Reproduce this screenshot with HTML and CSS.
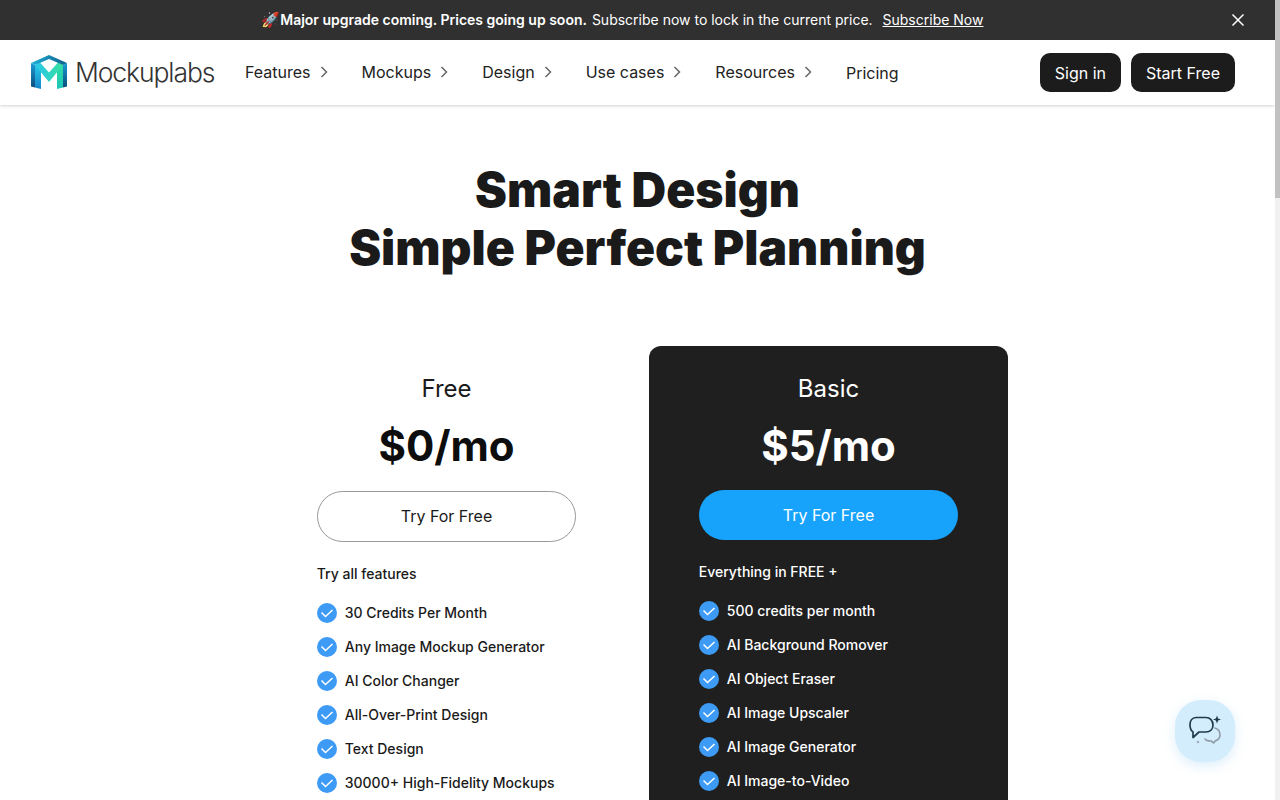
FILE: index.html
```html
<!DOCTYPE html>
<html lang="en">
<head>
<meta charset="utf-8">
<title>Mockuplabs Pricing</title>
<link rel="stylesheet" href="styles.css">
</head>
<body>
<div class="banner">
  <p class="banner-text"><span class="rocket">🚀</span><strong>Major upgrade coming. Prices going up soon.</strong> Subscribe now to lock in the current price. <a class="banner-link" href="#">Subscribe Now</a></p>
  <svg class="banner-close" width="14" height="14" viewBox="0 0 14 14"><path d="M1.500 1.500l11 11M12.500 1.500l-11 11" stroke="#fff" stroke-width="1.500" fill="none"/></svg>
</div>
<header class="nav">
  <a class="logo" href="#">
    <svg class="logo-mark" width="36" height="36" viewBox="0 0 36 36">
      <defs>
        <linearGradient id="lgOuterL" x1="0" y1="0" x2="0" y2="1"><stop offset="0" stop-color="#1b9ad6"/><stop offset="1" stop-color="#0a4f7a"/></linearGradient>
        <linearGradient id="lgInnerL" x1="0" y1="0" x2="0" y2="1"><stop offset="0" stop-color="#25c9e8"/><stop offset="1" stop-color="#1585c9"/></linearGradient>
        <linearGradient id="lgInnerR" x1="0" y1="0" x2="0" y2="1"><stop offset="0" stop-color="#2fdca4"/><stop offset="1" stop-color="#1cc6b8"/></linearGradient>
        <linearGradient id="lgV" x1="0" y1="0" x2="1" y2="0"><stop offset="0" stop-color="#28c7ee"/><stop offset="1" stop-color="#38e09c"/></linearGradient>
        <linearGradient id="lgTop" x1="0" y1="0" x2="1" y2="0"><stop offset="0" stop-color="#1fb0d8"/><stop offset="1" stop-color="#0d5f8c"/></linearGradient>
      </defs>
      <path d="M0 9L4 11V33.500L0 32.500Z" fill="url(#lgOuterL)"/>
      <path d="M4 11L10 14V35L4 33.500Z" fill="url(#lgInnerL)"/>
      <path d="M26 14L32 11V33.500L26 35Z" fill="url(#lgInnerR)"/>
      <path d="M32 11L36 9V32.500L32 33.500Z" fill="url(#lgOuterL)"/>
      <path d="M4 11L18 28L32 11L27 8.500L18 18.500L9 8.500Z" fill="url(#lgV)"/>
      <path d="M0 9L18 1L36 9L32 11L18 5L4 11Z" fill="url(#lgTop)"/>
    </svg>
    <span class="logo-text">Mockuplabs</span>
  </a>
  <nav class="menu">
    <a class="menu-item" href="#">Features<svg class="chev" width="8" height="12" viewBox="0 0 8 12"><path d="M1.500 1l5 5-5 5" stroke="#666" stroke-width="1.500" fill="none"/></svg></a>
    <a class="menu-item" href="#">Mockups<svg class="chev" width="8" height="12" viewBox="0 0 8 12"><path d="M1.500 1l5 5-5 5" stroke="#666" stroke-width="1.500" fill="none"/></svg></a>
    <a class="menu-item" href="#">Design<svg class="chev" width="8" height="12" viewBox="0 0 8 12"><path d="M1.500 1l5 5-5 5" stroke="#666" stroke-width="1.500" fill="none"/></svg></a>
    <a class="menu-item" href="#">Use cases<svg class="chev" width="8" height="12" viewBox="0 0 8 12"><path d="M1.500 1l5 5-5 5" stroke="#666" stroke-width="1.500" fill="none"/></svg></a>
    <a class="menu-item" href="#">Resources<svg class="chev" width="8" height="12" viewBox="0 0 8 12"><path d="M1.500 1l5 5-5 5" stroke="#666" stroke-width="1.500" fill="none"/></svg></a>
    <a class="menu-item menu-item-plain" href="#">Pricing</a>
  </nav>
  <div class="nav-actions">
    <a class="nav-btn" href="#">Sign in</a>
    <a class="nav-btn" href="#">Start Free</a>
  </div>
</header>
<main class="main">
  <h1 class="title">Smart Design<br>Simple Perfect Planning</h1>
  <section class="plans">
    <article class="plan">
      <h2 class="plan-name">Free</h2>
      <p class="plan-price">$0/mo</p>
      <a class="plan-btn plan-btn-outline" href="#">Try For Free</a>
      <p class="plan-lead">Try all features</p>
      <ul class="features">
        <li class="feature"><svg class="check" width="20" height="20" viewBox="0 0 20 20"><circle cx="10" cy="10" r="10" fill="#3d9bf5"/><path d="M4.500 9.500l4 4 7-6.500" stroke="#fff" stroke-width="1.500" fill="none"/></svg>30 Credits Per Month</li>
        <li class="feature"><svg class="check" width="20" height="20" viewBox="0 0 20 20"><circle cx="10" cy="10" r="10" fill="#3d9bf5"/><path d="M4.500 9.500l4 4 7-6.500" stroke="#fff" stroke-width="1.500" fill="none"/></svg>Any Image Mockup Generator</li>
        <li class="feature"><svg class="check" width="20" height="20" viewBox="0 0 20 20"><circle cx="10" cy="10" r="10" fill="#3d9bf5"/><path d="M4.500 9.500l4 4 7-6.500" stroke="#fff" stroke-width="1.500" fill="none"/></svg>AI Color Changer</li>
        <li class="feature"><svg class="check" width="20" height="20" viewBox="0 0 20 20"><circle cx="10" cy="10" r="10" fill="#3d9bf5"/><path d="M4.500 9.500l4 4 7-6.500" stroke="#fff" stroke-width="1.500" fill="none"/></svg>All-Over-Print Design</li>
        <li class="feature"><svg class="check" width="20" height="20" viewBox="0 0 20 20"><circle cx="10" cy="10" r="10" fill="#3d9bf5"/><path d="M4.500 9.500l4 4 7-6.500" stroke="#fff" stroke-width="1.500" fill="none"/></svg>Text Design</li>
        <li class="feature"><svg class="check" width="20" height="20" viewBox="0 0 20 20"><circle cx="10" cy="10" r="10" fill="#3d9bf5"/><path d="M4.500 9.500l4 4 7-6.500" stroke="#fff" stroke-width="1.500" fill="none"/></svg>30000+ High-Fidelity Mockups</li>
      </ul>
    </article>
    <article class="plan plan-dark">
      <h2 class="plan-name">Basic</h2>
      <p class="plan-price">$5/mo</p>
      <a class="plan-btn plan-btn-blue" href="#">Try For Free</a>
      <p class="plan-lead">Everything in FREE +</p>
      <ul class="features">
        <li class="feature"><svg class="check" width="20" height="20" viewBox="0 0 20 20"><circle cx="10" cy="10" r="10" fill="#3d9bf5"/><path d="M4.500 9.500l4 4 7-6.500" stroke="#fff" stroke-width="1.500" fill="none"/></svg>500 credits per month</li>
        <li class="feature"><svg class="check" width="20" height="20" viewBox="0 0 20 20"><circle cx="10" cy="10" r="10" fill="#3d9bf5"/><path d="M4.500 9.500l4 4 7-6.500" stroke="#fff" stroke-width="1.500" fill="none"/></svg>AI Background Romover</li>
        <li class="feature"><svg class="check" width="20" height="20" viewBox="0 0 20 20"><circle cx="10" cy="10" r="10" fill="#3d9bf5"/><path d="M4.500 9.500l4 4 7-6.500" stroke="#fff" stroke-width="1.500" fill="none"/></svg>AI Object Eraser</li>
        <li class="feature"><svg class="check" width="20" height="20" viewBox="0 0 20 20"><circle cx="10" cy="10" r="10" fill="#3d9bf5"/><path d="M4.500 9.500l4 4 7-6.500" stroke="#fff" stroke-width="1.500" fill="none"/></svg>AI Image Upscaler</li>
        <li class="feature"><svg class="check" width="20" height="20" viewBox="0 0 20 20"><circle cx="10" cy="10" r="10" fill="#3d9bf5"/><path d="M4.500 9.500l4 4 7-6.500" stroke="#fff" stroke-width="1.500" fill="none"/></svg>AI Image Generator</li>
        <li class="feature"><svg class="check" width="20" height="20" viewBox="0 0 20 20"><circle cx="10" cy="10" r="10" fill="#3d9bf5"/><path d="M4.500 9.500l4 4 7-6.500" stroke="#fff" stroke-width="1.500" fill="none"/></svg>AI Image-to-Video</li>
      </ul>
    </article>
  </section>
</main>
<button class="chat" type="button" aria-label="Chat">
  <svg width="36" height="36" viewBox="0 0 36 36" fill="none">
    <path d="M28 15c3 1 5 4 5 7s-2 5-5 6l-1 2-3-2c-2 0-5-.5-6-2" stroke="#8e9ca6" stroke-width="1.600" stroke-linejoin="round" stroke-linecap="round"/>
    <path d="M9 4.500h10c4 0 7 3 7 7.500s-3 7-7 7h-7l-6 5.500v-5.500c-2-1.500-3-4-3-7 0-4 2-7.500 6-7.500z" stroke="#1f3b4d" stroke-width="1.700" stroke-linejoin="round"/>
    <path d="M30 2.500l1.100 2.900 2.900 1.100-2.900 1.100-1.100 2.900-1.100-2.900-2.900-1.100 2.900-1.100z" fill="#1f3b4d"/>
    <circle cx="11" cy="29" r="1.300" fill="#9fb0bb"/>
  </svg>
</button>
<div class="scrollbar"><div class="scrollbar-thumb"></div></div>
</body>
</html>
```

FILE: styles.css
```css
* { box-sizing: border-box; }
body { margin: 0; padding-right: 5px; background: #fff; color: #1a1a1a; font-family: Inter, "Liberation Sans", sans-serif; }
a { color: inherit; text-decoration: none; }
h1, h2, p, ul { margin: 0; padding: 0; }

.scrollbar { position: fixed; top: 0; right: 0; bottom: 0; width: 5px; background: #f1f1f1; }
.scrollbar-thumb { height: 198px; background: #c1c1c1; }

.banner { height: 40px; background: #303030; color: #fff; display: flex; align-items: center; justify-content: center; position: relative; padding-right: 30px; }
.banner-text { font-size: 14px; line-height: 20px; }
.banner-text strong { font-weight: 600; margin-right: 1px; }
.rocket { font-family: "Noto Color Emoji", sans-serif; font-size: 15px; }
.banner-link { text-decoration: underline; margin-left: 6px; }
.banner-close { position: absolute; right: 30px; top: 13px; }

.nav { height: 65px; display: flex; align-items: center; padding: 0 40px 0 31px; box-shadow: 0 1px 3px rgba(0,0,0,.18); background: #fff; }
.logo { display: flex; align-items: center; gap: 8px; width: 214px; }
.logo-mark { margin-bottom: 2px; }
.logo-text { font-weight: 300; font-size: 26.500px; letter-spacing: -1.100px; color: #333; margin-bottom: 1px; }
.menu { display: flex; align-items: center; gap: 34px; flex: 1; }
.menu-item { font-size: 16px; line-height: 24px; display: flex; align-items: center; gap: 9px; color: #222; padding-bottom: 2px; }
.menu-item-plain { padding-bottom: 0; }
.nav-actions { display: flex; gap: 10px; }
.nav-btn { height: 39px; padding: 0 15px; display: flex; align-items: center; background: #1c1c1c; color: #fff; border-radius: 10px; font-size: 16px; }

.main { padding-top: 56px; }
.title { text-align: center; font-size: 48px; line-height: 58px; font-weight: 900; color: #1a1a1a; }
.plans { display: flex; justify-content: center; gap: 22.500px; margin-top: 69px; }
.plan { width: 359.500px; height: 700px; padding: 30px 50px; border-radius: 12px; text-align: center; }
.plan-dark { background: #1f1f1f; color: #fff; }
.plan-name { font-size: 24px; line-height: 26px; font-weight: 400; }
.plan-price { font-size: 42px; line-height: 50px; font-weight: 700; margin-top: 19px; color: #0d0d0d; }
.plan-dark .plan-price { color: #fff; }
.plan-btn { display: flex; align-items: center; justify-content: center; border-radius: 26px; font-size: 16px; }
.plan-btn-outline { border: 1px solid #999; height: 51px; margin-top: 20px; padding-bottom: 2px; }
.plan-btn-blue { background: #17a2fb; height: 50px; margin-top: 19px; }
.plan-lead { font-size: 14px; line-height: 20px; text-align: left; margin-top: 22px; font-weight: 450; }
.features { list-style: none; margin-top: 11px; }
.feature { display: flex; align-items: center; gap: 8px; height: 34px; font-size: 14px; font-weight: 450; text-align: left; }
.check { flex: none; margin-top: 2px; }

.chat { position: fixed; right: 45px; bottom: 38px; width: 60px; height: 62px; border: 0; padding: 0; border-radius: 26px; background: #d4edfd; display: flex; align-items: center; justify-content: center; box-shadow: 0 4px 12px rgba(120,190,240,.25); }
```
